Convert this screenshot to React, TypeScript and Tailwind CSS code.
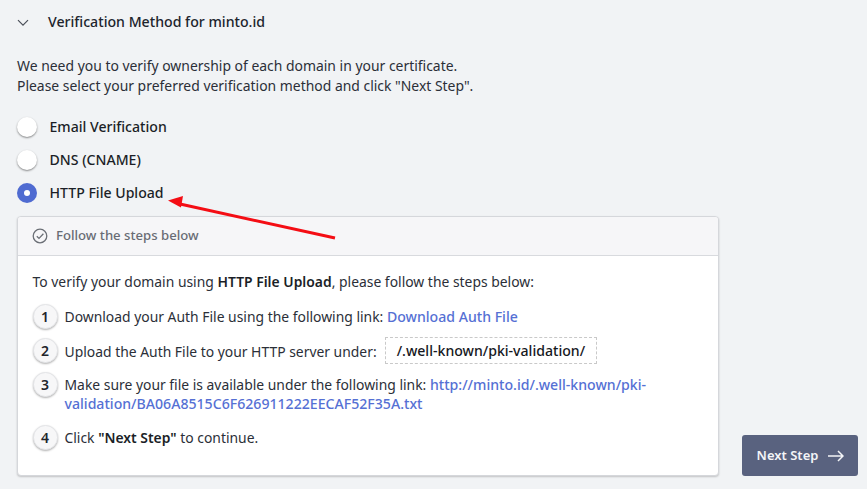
import type { ReactNode } from 'react';

function Radio({ label, checked }: { label: string; checked?: boolean }) {
  return (
    <div className="flex h-[33px] items-center">
      {checked ? (
        <span className="flex h-5 w-5 items-center justify-center rounded-full bg-[#4f6bd1]">
          <span className="h-1.5 w-1.5 rounded-full bg-white" />
        </span>
      ) : (
        <span className="h-5 w-5 rounded-full bg-white shadow-[0_1px_2px_rgba(0,0,0,0.45)]" />
      )}
      <span className="ml-[12.5px] text-[14.1px] font-medium text-[#1b1f27]">{label}</span>
    </div>
  );
}

function Step({ n, children, className }: { n: number; children: ReactNode; className?: string }) {
  return (
    <div className={'flex items-start ' + (className ?? '')}>
      <span className="flex h-[25px] w-[25px] shrink-0 items-center justify-center rounded-full border border-[#e4e5e8] bg-[#f7f7f8] text-[14px] font-semibold text-[#22252b] shadow-[0_1px_2px_rgba(0,0,0,0.3)]">
        {n}
      </span>
      <div className="ml-[7px] w-[590px] text-[13.9px] leading-[19.5px] text-[#2b2f38]">{children}</div>
    </div>
  );
}

export default function App() {
  return (
    <div className="relative flex h-[489px] w-[867px] overflow-hidden bg-[#f1f3f5] font-['Noto_Sans',sans-serif]">
      <div className="ml-[17px] w-[702px]">
        <div className="flex h-[44px] items-center">
          <svg width="12" height="8" viewBox="0 0 12 8" fill="none" stroke="#4a4f59" strokeWidth="1.2" className="mt-[2px]">
            <path d="M1 1.2l5 5 5-5" />
          </svg>
          <span className="ml-[19px] text-[14.15px] font-medium text-[#20242c]">Verification Method for minto.id</span>
        </div>
        <p className="mt-[12px] text-[13.93px] leading-[20px] text-[#2b2f38]">
          We need you to verify ownership of each domain in your certificate.
          <br />
          Please select your preferred verification method and click "Next Step".
        </p>
        <div className="mt-[14px]">
          <Radio label="Email Verification" />
          <Radio label="DNS (CNAME)" />
          <Radio label="HTTP File Upload" checked />
        </div>
        <div className="mt-[7px] h-[260px] overflow-hidden rounded-[4px] border border-[#d5d7db] bg-white shadow-[0_1px_2px_rgba(0,0,0,0.2)]">
          <div className="flex h-[39px] items-center border-b border-[#d8dade] bg-[#f6f6f8] pl-[14px]">
            <svg width="16" height="16" viewBox="0 0 16 16" fill="none" stroke="#6b6f76" strokeWidth="1.3">
              <circle cx="8" cy="8" r="6.8" />
              <path d="M4.8 8.2l2.2 2.2 4.4-4.6" />
            </svg>
            <span className="ml-[8px] text-[13.15px] font-medium text-[#686c74]">Follow the steps below</span>
          </div>
          <div className="px-[14.5px] pt-[16px]">
            <p className="text-[13.9px] leading-[20px] text-[#2b2f38]">
              To verify your domain using <b className="font-semibold text-[#1b1f27]">HTTP File Upload</b>, please follow the steps below:
            </p>
            <Step n={1} className="mt-[11.5px]">
              <span className="inline-block pt-[3px]">
                Download your Auth File using the following link:{' '}
                <a className="text-[14.1px] font-medium text-[#5570d4]">Download Auth File</a>
              </span>
            </Step>
            <Step n={2} className="mt-[9px] h-[25px]">
              <span className="inline-block pt-[3px]">Upload the Auth File to your HTTP server under:</span>
              <span className="relative -top-[1px] ml-[8px] inline-block border border-dashed border-[#c9c9c9] px-[11px] py-[3px] text-[14.1px] font-medium text-[#16181d]">
                /.well-known/pki-validation/
              </span>
            </Step>
            <Step n={3} className="mt-[9px]">
              <span className="inline-block pt-[3px]">
                Make sure your file is available under the following link:{' '}
                <a className="text-[14.12px] font-medium text-[#5570d4]">
                  http://minto.id/.well-known/pki-validation/BA06A8515C6F626911222EECAF52F35A.txt
                </a>
              </span>
            </Step>
            <Step n={4} className="mt-[11px]">
              <span className="inline-block pt-[3px]">
                Click <b className="font-semibold text-[#1b1f27]">"Next Step"</b> to continue.
              </span>
            </Step>
          </div>
        </div>
      </div>
      <div className="ml-[23px] mt-[435px]">
        <button className="flex h-[41px] w-[116px] items-center justify-center rounded-[3px] bg-[#59627f] pl-[1px] text-[13px] font-semibold text-[#f4f5f8]">
          Next Step
          <svg width="16" height="12" viewBox="0 0 16 12" fill="none" stroke="#f4f5f8" strokeWidth="1.5" className="ml-[10px]">
            <path d="M0 6h15M10 1l5 5-5 5" />
          </svg>
        </button>
      </div>
      <svg className="absolute left-[160px] top-[190px]" width="180" height="55" viewBox="0 0 180 55" fill="none">
        <path d="M175 48L20 14" stroke="#f40d14" strokeWidth="3" />
        <path d="M8 10.5L23 6L21 17.5Z" fill="#f40d14" />
      </svg>
    </div>
  );
}
